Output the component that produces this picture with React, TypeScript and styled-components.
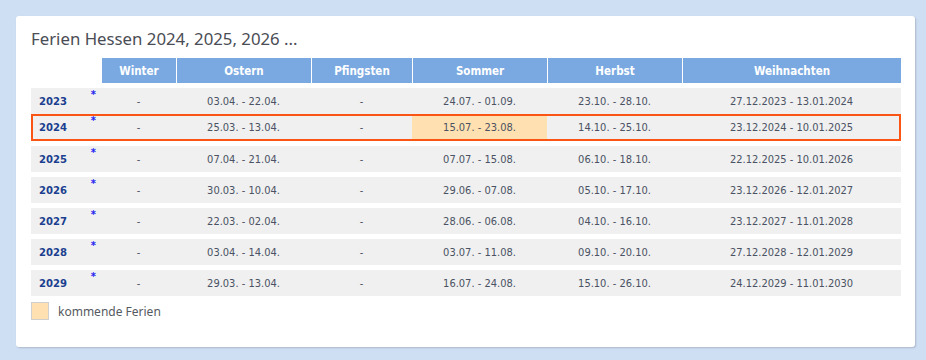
import React from 'react'
import styled, { createGlobalStyle, css } from 'styled-components'

const GlobalStyle = createGlobalStyle`
  html, body {
    margin: 0;
    padding: 0;
    background: #cfdff3;
  }
  body {
    font-family: 'DejaVu Sans Condensed', 'DejaVu Sans', sans-serif;
    font-stretch: condensed;
  }
`

const Page = styled.div`
  width: 926px;
  height: 360px;
  padding: 16px 11px 13px 16px;
  box-sizing: border-box;
`

const Card = styled.section`
  background: #fff;
  border-radius: 3px;
  box-shadow: 1px 1px 2px rgba(0, 0, 0, 0.18);
  height: 100%;
  padding: 13px 14px 0 15px;
  box-sizing: border-box;
`

const Title = styled.h2`
  margin: 0 0 9px;
  font-family: 'Noto Sans', 'Open Sans', sans-serif;
  font-stretch: normal;
  font-weight: 400;
  font-size: 16.8px;
  line-height: 20px;
  color: #4a4d55;
`

const Grid = styled.div`
  display: grid;
  grid-template-columns: 70px 75px 135px 101px 135px 135px 219px;
`

const HeadRow = styled(Grid)`
  height: 25px;
`

const HeadCell = styled.div<{ $blank?: boolean }>`
  display: flex;
  align-items: center;
  justify-content: center;
  font-weight: 700;
  font-size: 11.5px;
  color: #fff;
  background: ${(p) => (p.$blank ? 'transparent' : '#7aa9e1')};
  border-left: ${(p) => (p.$blank ? 'none' : '1px solid #fff')};
`

const Row = styled(Grid)<{ $current?: boolean }>`
  height: 26px;
  margin-top: 5px;
  background: #f0f0f0;
  ${(p) =>
    p.$current &&
    css`
      margin-top: 0;
      height: 27px;
      outline: 2px solid #fa5514;
      outline-offset: -2px;
    `}
`

const YearCell = styled.div`
  display: flex;
  justify-content: space-between;
  align-items: stretch;
  padding: 0 5px 0 8px;
`

const Year = styled.span`
  align-self: center;
  font-weight: 700;
  font-size: 11.2px;
  color: #1b3f8f;
`

const Star = styled.span`
  font-weight: 700;
  font-size: 11px;
  line-height: 1;
  color: #2424f0;
  margin-top: 1px;
`

const Cell = styled.div<{ $upcoming?: boolean }>`
  display: flex;
  align-items: center;
  justify-content: center;
  font-size: 11px;
  color: #4a5263;
  background: ${(p) => (p.$upcoming ? '#ffe0b0' : 'transparent')};
`

const Legend = styled.div`
  display: flex;
  align-items: center;
  gap: 9px;
  margin-top: 6px;
  font-family: 'Noto Sans', 'Open Sans', sans-serif;
  font-stretch: normal;
  font-size: 12px;
  color: #555a60;
`

const Swatch = styled.span`
  width: 16px;
  height: 16px;
  background: #ffe0b0;
  border: 1px solid #cfcfcf;
`

const columns = ['Winter', 'Ostern', 'Pfingsten', 'Sommer', 'Herbst', 'Weihnachten']

const rows = [
  { year: '2023', dates: ['-', '03.04. - 22.04.', '-', '24.07. - 01.09.', '23.10. - 28.10.', '27.12.2023 - 13.01.2024'] },
  { year: '2024', current: true, upcoming: 3, dates: ['-', '25.03. - 13.04.', '-', '15.07. - 23.08.', '14.10. - 25.10.', '23.12.2024 - 10.01.2025'] },
  { year: '2025', dates: ['-', '07.04. - 21.04.', '-', '07.07. - 15.08.', '06.10. - 18.10.', '22.12.2025 - 10.01.2026'] },
  { year: '2026', dates: ['-', '30.03. - 10.04.', '-', '29.06. - 07.08.', '05.10. - 17.10.', '23.12.2026 - 12.01.2027'] },
  { year: '2027', dates: ['-', '22.03. - 02.04.', '-', '28.06. - 06.08.', '04.10. - 16.10.', '23.12.2027 - 11.01.2028'] },
  { year: '2028', dates: ['-', '03.04. - 14.04.', '-', '03.07. - 11.08.', '09.10. - 20.10.', '27.12.2028 - 12.01.2029'] },
  { year: '2029', dates: ['-', '29.03. - 13.04.', '-', '16.07. - 24.08.', '15.10. - 26.10.', '24.12.2029 - 11.01.2030'] },
]

export default function App() {
  return (
    <>
      <GlobalStyle />
      <Page>
        <Card>
          <Title>Ferien Hessen 2024, 2025, 2026 ...</Title>
          <HeadRow>
            <HeadCell $blank />
            {columns.map((c) => (
              <HeadCell key={c}>{c}</HeadCell>
            ))}
          </HeadRow>
          {rows.map((r) => (
            <Row key={r.year} $current={r.current}>
              <YearCell>
                <Year>{r.year}</Year>
                <Star>*</Star>
              </YearCell>
              {r.dates.map((d, i) => (
                <Cell key={i} $upcoming={r.upcoming === i}>
                  {d}
                </Cell>
              ))}
            </Row>
          ))}
          <Legend>
            <Swatch />
            kommende Ferien
          </Legend>
        </Card>
      </Page>
    </>
  )
}
